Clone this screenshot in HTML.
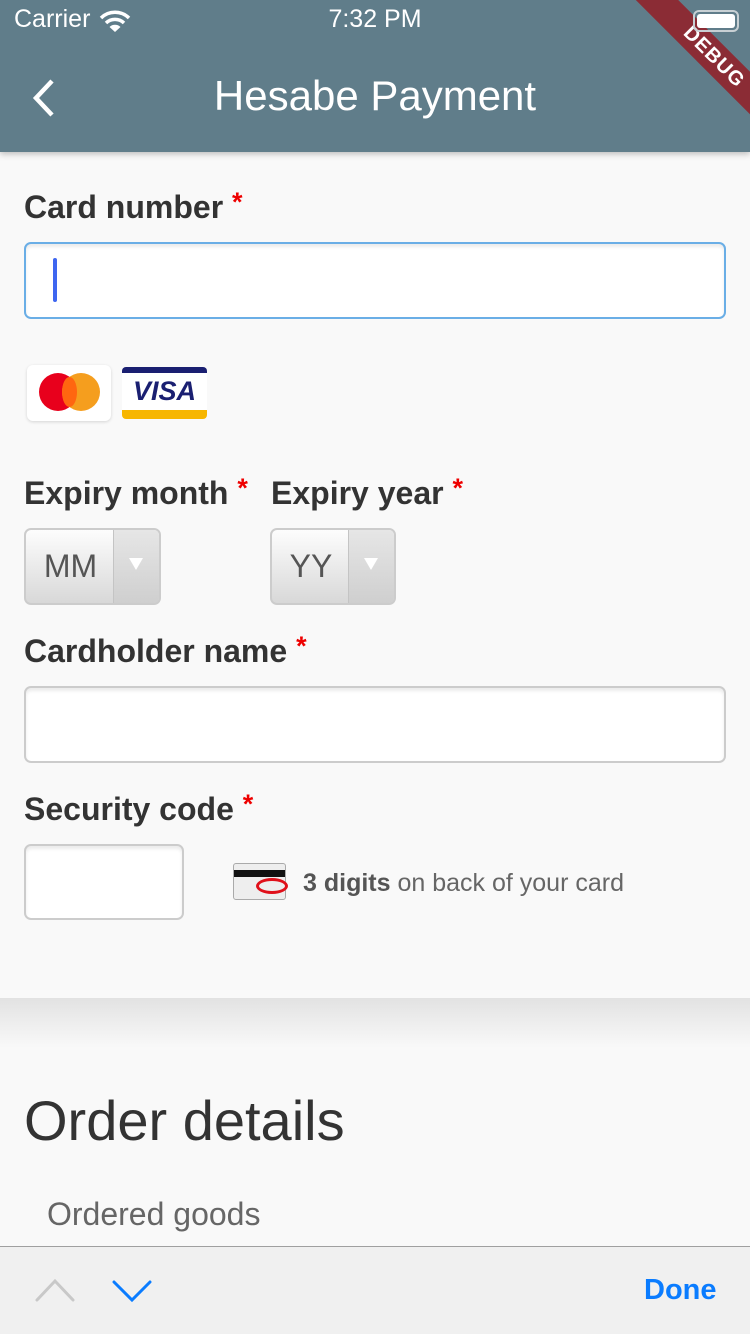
<!DOCTYPE html>
<html><head><meta charset="utf-8"><style>
*{box-sizing:border-box;margin:0;padding:0}
body{width:750px;height:1334px;overflow:hidden;background:#f9f9f9;font-family:"Liberation Sans",sans-serif;position:relative;color:#333}
.abs{position:absolute}
.hdr{left:0;top:0;width:750px;height:152px;background:#607d8a;box-shadow:0 2px 6px rgba(0,0,0,.25)}
.lbl{font-weight:bold;font-size:32px;color:#333;white-space:nowrap}
.lbl span{color:#e00;font-size:27px;vertical-align:top;position:relative;top:-2px}
.inp{background:#fff;border:2px solid #ccc;border-radius:7px;box-shadow:inset 0 3px 3px rgba(0,0,0,.08)}
.sel{border:2px solid #ccc;border-radius:7px;background:linear-gradient(#fdfdfd,#d8d8d8);overflow:hidden}
.sel .t{position:absolute;left:0;top:0;bottom:0;display:flex;align-items:center;justify-content:center;font-size:32px;color:#555}
.sel .a{position:absolute;right:0;top:0;bottom:0;width:46px;border-left:1px solid #c4c4c4;background:linear-gradient(#e6e6e6,#cfcfcf)}
.sel .a:after{content:"";position:absolute;left:15px;top:28px;border-left:7px solid transparent;border-right:7px solid transparent;border-top:12px solid #fff}
</style></head><body>
<div class="abs hdr"></div>
<div class="abs" style="left:614px;top:42px;width:200px;height:30px;background:#8b2c35;transform:rotate(45deg);color:#fff;font-weight:bold;font-size:20px;text-align:center;line-height:30px;letter-spacing:1px">DEBUG</div>
<div class="abs" style="left:14px;top:5px;font-size:25px;color:#fff">Carrier</div>
<svg class="abs" style="left:99px;top:9px" width="32" height="24" viewBox="0 0 32 24"><path d="M2 9 A20 20 0 0 1 30 9" stroke="#fff" stroke-width="3.5" fill="none"/><path d="M7 14 A13 13 0 0 1 25 14" stroke="#fff" stroke-width="3.5" fill="none"/><path d="M16 23 L10.5 18 A8 8 0 0 1 21.5 18 Z" fill="#fff"/></svg>
<div class="abs" style="left:0;width:750px;top:5px;text-align:center;font-size:25px;color:#fff">7:32 PM</div>
<div class="abs" style="left:693px;top:10px;width:46px;height:22px;border:2px solid #c8d0d4;border-radius:6px;padding:2px"><div style="width:100%;height:100%;background:#fff;border-radius:3px"></div></div>
<svg class="abs" style="left:28px;top:78px" width="32" height="40" viewBox="0 0 32 40"><path d="M24 3 L8 20 L24 37" stroke="#fff" stroke-width="4.5" fill="none"/></svg>
<div class="abs" style="left:0;width:750px;top:72px;text-align:center;font-size:42px;color:#fff">Hesabe Payment</div>

<div class="abs lbl" style="left:24px;top:189px">Card number <span>*</span></div>
<div class="abs inp" style="left:24px;top:242px;width:702px;height:77px;border-color:#6aaee6"></div>
<div class="abs" style="left:53px;top:258px;width:4px;height:44px;background:#3e66f0;border-radius:2px"></div>

<div class="abs" style="left:27px;top:365px;width:84px;height:56px;background:#fff;border-radius:6px;box-shadow:0 1px 3px rgba(0,0,0,.15)"></div>
<div class="abs" style="left:39px;top:373px;width:38px;height:38px;border-radius:50%;background:#e8001c"></div>
<div class="abs" style="left:62px;top:373px;width:38px;height:38px;border-radius:50%;background:#f59e1e"></div>
<div class="abs" style="left:62px;top:377px;width:15px;height:30px;border-radius:50%;background:#ff6610"></div>
<div class="abs" style="left:122px;top:367px;width:85px;height:52px;background:#fff;border-radius:4px;overflow:hidden">
<div style="height:6px;background:#1a1f71"></div>
<div style="text-align:center;font-weight:bold;font-style:italic;font-size:27px;color:#1a1f71;line-height:36px">VISA</div>
<div style="position:absolute;bottom:0;left:0;right:0;height:9px;background:#f7b600"></div></div>

<div class="abs lbl" style="left:24px;top:475px">Expiry month <span>*</span></div>
<div class="abs lbl" style="left:271px;top:475px">Expiry year <span>*</span></div>
<div class="abs sel" style="left:24px;top:528px;width:137px;height:77px"><div class="t" style="width:89px">MM</div><div class="a"></div></div>
<div class="abs sel" style="left:270px;top:528px;width:126px;height:77px"><div class="t" style="width:78px">YY</div><div class="a"></div></div>

<div class="abs lbl" style="left:24px;top:633px">Cardholder name <span>*</span></div>
<div class="abs inp" style="left:24px;top:686px;width:702px;height:77px"></div>

<div class="abs lbl" style="left:24px;top:791px">Security code <span>*</span></div>
<div class="abs inp" style="left:24px;top:844px;width:160px;height:76px"></div>
<div class="abs" style="left:233px;top:863px;width:53px;height:37px;border:1px solid #aaa;border-radius:3px;background:#eee;overflow:hidden"><div style="margin-top:6px;height:7px;background:#111"></div></div>
<div class="abs" style="left:256px;top:878px;width:32px;height:16px;border:3px solid #e0101a;border-radius:50%"></div>
<div class="abs" style="left:303px;top:869px;font-size:25px;color:#666"><b style="color:#555">3 digits</b> on back of your card</div>

<div class="abs" style="left:0;top:998px;width:750px;height:50px;background:linear-gradient(#e2e2e2,#f9f9f9)"></div>
<div class="abs" style="left:24px;top:1088px;font-size:56px;color:#333">Order details</div>
<div class="abs" style="left:47px;top:1196px;font-size:32px;color:#666">Ordered goods</div>

<div class="abs" style="left:0;top:1246px;width:750px;height:88px;background:#f0f0f0;border-top:1px solid #a0a0a0"></div>
<svg class="abs" style="left:34px;top:1278px" width="42" height="26" viewBox="0 0 42 26"><path d="M3 22 L21 3 L39 22" stroke="#c8c8c8" stroke-width="3" fill="none" stroke-linecap="round"/></svg>
<svg class="abs" style="left:111px;top:1278px" width="42" height="26" viewBox="0 0 42 26"><path d="M3 4 L21 22 L39 4" stroke="#0a7cff" stroke-width="3" fill="none" stroke-linecap="round"/></svg>
<div class="abs" style="left:644px;top:1274px;font-size:29px;font-weight:bold;color:#0a7cff">Done</div>
</body></html>
